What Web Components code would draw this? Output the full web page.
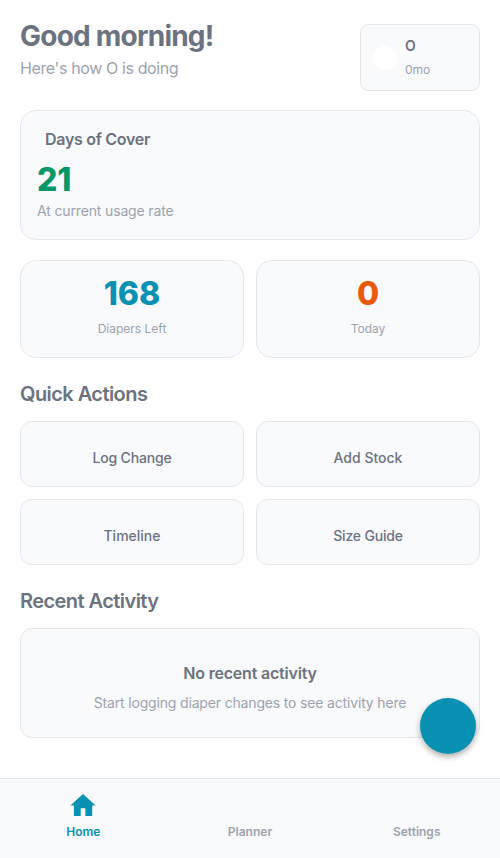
<!DOCTYPE html>
<html lang="en">
<head>
<meta charset="utf-8">
<title>Diaper Planner</title>
<style>
html, body { margin: 0; height: 100%; background: #fff; font-family: Inter, Roboto, sans-serif; }
</style>
</head>
<body>
<home-screen></home-screen>
<script>
function define(name, html) {
  const template = document.createElement('template');
  template.innerHTML = html;
  customElements.define(name, class extends HTMLElement {
    constructor() {
      super();
      this.attachShadow({ mode: 'open' }).append(template.content.cloneNode(true));
    }
  });
}

define('ui-card', `
<style>
:host { display: flex; flex-direction: column; box-sizing: border-box; background: #f9fafc; border: 1px solid #e5e7eb; border-radius: 16px; }
</style><slot></slot>`);

define('profile-chip', `
<style>
:host { display: flex; align-items: center; gap: 8px; box-sizing: border-box; width: 120px; height: 67px; padding: 0 12px; background: #f9fafc; border: 1px solid #e5e7eb; border-radius: 8px; }
.avatar { width: 24px; height: 24px; border-radius: 50%; background: #fff; }
.name { font-size: 14px; line-height: 20px; font-weight: 600; color: #6b7280; margin-bottom: 5px; }
.age { font-size: 12px; line-height: 18px; color: #9ca3af; }
.copy { padding-bottom: 1px; }
</style>
<div class="avatar"></div>
<div class="copy"><div class="name"><slot name="name"></slot></div><div class="age"><slot name="age"></slot></div></div>`);

define('page-header', `
<style>
:host { display: flex; justify-content: space-between; align-items: flex-start; height: 86px; padding-top: 24px; box-sizing: border-box; margin-bottom: 24px; }
h1 { margin: -5px 0 0; font-size: 28px; line-height: 34px; font-weight: 700; letter-spacing: -0.78px; color: #6b7280; }
p { margin: 4px 0 0; font-size: 16px; line-height: 22px; letter-spacing: -0.38px; color: #9ca3af; }
</style>
<div><h1><slot></slot></h1><p><slot name="subtitle"></slot></p></div>
<slot name="aside"></slot>`);

define('cover-card', `
<style>
:host { display: block; }
ui-card { height: 130px; padding: 17px 16px; }
.title { margin-left: 8px; font-size: 16px; line-height: 22px; font-weight: 600; letter-spacing: -0.3px; color: #6b7280; }
.value { margin-top: 10px; font-size: 32px; line-height: 40px; font-weight: 800; letter-spacing: -0.2px; color: #059669; }
.note { margin-top: 1px; font-size: 14px; line-height: 20px; letter-spacing: -0.15px; color: #9ca3af; }
</style>
<ui-card><div class="title"><slot name="title"></slot></div><div class="value"><slot></slot></div><div class="note"><slot name="note"></slot></div></ui-card>`);

define('stat-card', `
<style>
:host { display: block; text-align: center; }
ui-card { height: 98px; padding-top: 13px; }
.value { font-size: 32px; line-height: 40px; font-weight: 800; color: var(--accent); }
.label { margin-top: 6px; font-size: 12px; line-height: 18px; color: #9ca3af; }
</style>
<ui-card><div class="value"><slot></slot></div><div class="label"><slot name="label"></slot></div></ui-card>`);

define('action-tile', `
<style>
:host { display: block; }
ui-card { height: 66px; padding-top: 26px; border-radius: 12px; align-items: center; font-size: 14px; line-height: 20px; font-weight: 500; color: #6b7280; letter-spacing: var(--track, 0); }
</style>
<ui-card><span><slot></slot></span></ui-card>`);

define('section-title', `
<style>
:host { display: block; font-size: 20px; line-height: 26px; font-weight: 600; letter-spacing: -0.56px; color: #6b7280; }
</style><slot></slot>`);

define('empty-state', `
<style>
:host { display: block; text-align: center; }
ui-card { height: 110px; padding-top: 33px; border-radius: 12px; }
.title { font-size: 16px; line-height: 22px; font-weight: 600; letter-spacing: -0.2px; color: #6b7280; }
.note { margin-top: 9px; font-size: 14px; line-height: 20px; letter-spacing: -0.165px; color: #9ca3af; }
</style>
<ui-card><div class="title"><slot name="title"></slot></div><div class="note"><slot></slot></div></ui-card>`);

define('tab-item', `
<style>
:host { display: flex; flex: 1; flex-direction: column; align-items: center; color: #9ca3af; }
:host([active]) { color: #0891b2; }
.icon { width: 28px; height: 28px; margin-top: 12px; }
.label { margin-top: 4px; font-size: 12px; line-height: 18px; font-weight: 600; }
</style>
<div class="icon"><slot name="icon"></slot></div><div class="label"><slot></slot></div>`);

define('tab-bar', `
<style>
:host { display: flex; box-sizing: border-box; height: 80px; background: #f9fafc; border-top: 1px solid #e5e7eb; }
</style><slot></slot>`);

define('floating-button', `
<style>
:host { position: absolute; right: 24px; bottom: 104px; width: 56px; height: 56px; border-radius: 50%; background: #0891b2; box-shadow: 0 3px 6px rgba(0,0,0,.32); }
</style>`);

define('home-screen', `
<style>
:host { display: flex; flex-direction: column; position: relative; height: 858px; width: 500px; overflow: hidden; }
main { flex: 1; padding: 0 20px; }
.grid { display: grid; grid-template-columns: 1fr 1fr; gap: 12px; }
.stats { margin: 20px 0 23px; }
.actions { margin: 14px 0 23px; }
.tight { --track: -0.18px; }
empty-state { margin-top: 14px; }
svg { display: block; }
</style>
<main>
<page-header>Good morning!<span slot="subtitle">Here's how O is doing</span>
<profile-chip slot="aside"><span slot="name">O</span><span slot="age">0mo</span></profile-chip></page-header>
<cover-card><span slot="title">Days of Cover</span>21<span slot="note">At current usage rate</span></cover-card>
<div class="grid stats">
<stat-card style="--accent:#0891b2">168<span slot="label">Diapers Left</span></stat-card>
<stat-card style="--accent:#ea580c">0<span slot="label">Today</span></stat-card>
</div>
<section-title>Quick Actions</section-title>
<div class="grid actions">
<action-tile class="tight">Log Change</action-tile><action-tile>Add Stock</action-tile>
<action-tile>Timeline</action-tile><action-tile class="tight">Size Guide</action-tile>
</div>
<section-title>Recent Activity</section-title>
<empty-state><span slot="title">No recent activity</span>Start logging diaper changes to see activity here</empty-state>
</main>
<tab-bar>
<tab-item active>Home<svg slot="icon" width="28" height="28" viewBox="0 0 28 28"><path fill="currentColor" d="M14 3 26.6 14.6H23.2V25H16.4V17.3H11.7V25H4.9V14.6H1.4z"/></svg></tab-item>
<tab-item>Planner</tab-item>
<tab-item>Settings</tab-item>
</tab-bar>
<floating-button></floating-button>`);
</script>
</body>
</html>
